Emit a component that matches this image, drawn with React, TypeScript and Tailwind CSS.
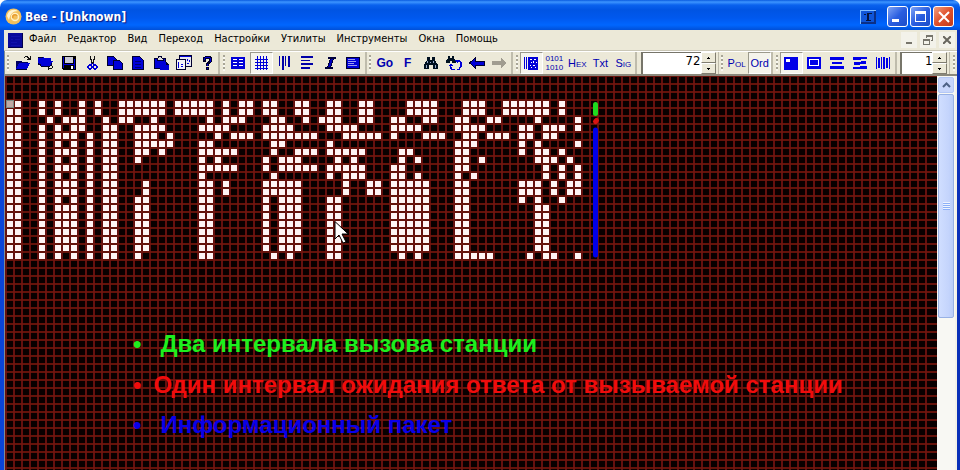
import React from "react";

const range = (a: number, b: number) => Array.from({ length: b - a + 1 }, (_, i) => a + i);

const tall = "0-1 4 6-8 10 12-13 16-17 24-25 32 34-36 40-41 48-52 56-57 66-67";
const head = "0-1 4 6 9 11 14-19 21-25 27 29-30 32-33 36-37 40-41 44-45 50-53 57-59 62-67 69";
const mid = "0-1 4 6-8 10 12-13 17 24-25 27 32-36 42 45-46 48-52 56-57 64-66 68 70-71";

// Filled columns of each signal row, as single columns or inclusive runs.
const signalRows: string[] = [
  head,
  head,
  "0-1 5 7-9 12 14-15 18 25 27-29 33-34 37 39-41 44-45 48-49 52-53 56-57 60-61 66 71",
  "0-1 4 6 8-9 12-13 16-19 24-27 32-35 40-43 48-51 56-59 64-65 67-69 71",
  "0-1 4 6-8 10 12-13 16-18 20 26 28-30 32-38 42-46 48 52-54 57-58 60-62 64-65 67-68",
  "0-1 4 6 8 10 12-13 16-20 24-25 33-34 40 56-58 64 66 71",
  "0-1 4 6-8 10 12-13 16-17 19 24-28 33 36-38 40-44 49-50 56-57 64 66-67 69",
  "0-1 4 6 8 10 12-13 16 24 26 32 34-36 41 43 49 51 56-57 59 66-68 70",
  "0-1 4 6-8 10 12-13 24-28 32 34-38 40-44 48-49 56-57 67 69 71",
  "0-1 4 6 8 10 12-13 24 33 40 42-44 48-49 51 56 58 67 69 71",
  mid,
  mid,
  "0-1 4 6 8 10 12-13 16-17 24-25 32 34-36 40-41 48-52 56-57 64 66 69",
  tall,
  tall,
  tall,
  tall,
  tall,
  tall,
  "0-1 4 6 8 10 12-13 16 24-25 33 35 40-41 49 51 56-60 65 67-68 71",
];

const cells = signalRows.flatMap((row, r) =>
  row.split(" ").flatMap((part) => {
    const [a, b] = part.split("-").map(Number);
    return range(a, b ?? a).map((c) => ({ r, c }));
  }),
);

function Icon({ children, color = "#0000d8" }: { children: React.ReactNode; color?: string }) {
  return (
    <svg width="16" height="16" viewBox="0 0 16 16" fill={color} shapeRendering="crispEdges" aria-hidden="true">
      {children}
    </svg>
  );
}

const K = "#000030";

const OpenIcon = () => (
  <Icon>
    <path d="M1 6h5l1 1h6v2H4l-2 4H1z" fill="#000060" />
    <path d="M4 8h11l-3 6H1z" />
    <path d="M1 14h11v1H1z" fill={K} />
    <path d="M9 2h1V1h3v1h1v1h1V1h1v4h-4V4h1V3h-1V2h-2v1H9z" fill="#111" />
  </Icon>
);
const CloseFileIcon = () => (
  <Icon>
    <path d="M0 2h5l1 1h7v3h2l-3 5H3L0 8z" />
    <path d="M0 2h5v1H0zM3 11h9v-1h1V8h1v3h-2v1H3zM0 8h1v1h2v2H2v-1H0z" fill={K} />
    <path d="M14 11h1v2h-1v1h-3v1h-1v-4h1v2h3z" fill="#111" />
  </Icon>
);
const SaveIcon = () => (
  <Icon>
    <path d="M1 1h14v14H2l-1-1z" fill="#000" />
    <path d="M2 2h1v11H2zM13 4h1v10h-1zM3 9h10v1H3z" />
    <path d="M4 2h8v6H4z" fill="#c8c8d8" />
    <path d="M10 11h2v3h-2z" fill="#fff" />
  </Icon>
);
const CutIcon = () => (
  <Icon>
    <path d="M6 1h1v3h1v3h1V4h1V1h1v4h-1v3H9v1H8V8H7V5H6z" fill="#111" />
    <path d="M7 8h1v2H7zM9 8h1v2H9z" />
    <circle cx="6" cy="12" r="2" fill="none" stroke="#0000d8" strokeWidth="1.5" />
    <circle cx="11" cy="12" r="2" fill="none" stroke="#0000d8" strokeWidth="1.5" />
  </Icon>
);
const CopyIcon = () => (
  <Icon>
    <path d="M.5 1.500h6l3 3v6h-9z" stroke={K} />
    <path d="M6.500 5.500h6l3 3v6h-9z" stroke={K} />
  </Icon>
);
const DocIcon = () => (
  <Icon>
    <path d="M2.500 1.500h7l4 4v9h-11z" stroke={K} />
    <path d="M5 6h6v1H5zM5 9h6v1H5zM5 12h6v1H5z" fill="#000070" />
  </Icon>
);
const PasteIcon = () => (
  <Icon>
    <path d="M1.500 3.500h11v10h-11z" stroke={K} />
    <path d="M4 3h1l1-2h2l1 2h1v2H4z" fill="#ddd" stroke={K} />
    <path d="M7 7h6l3 3v5H7z" />
    <path d="M13 7h1v1h1v1h1v1h-3z" fill={K} />
  </Icon>
);
const WindowsIcon = () => (
  <Icon>
    <path d="M3.500.5h12v11h-12z" fill="#e8e8f0" stroke={K} />
    <path d="M4 1h11v1H4z" />
    <path d="M.5 4.500h9v10h-9z" fill="#f4f4f8" stroke={K} />
    <path d="M2 7h1v6H2zM5 9h2v1H5zM5 11h2v1H5zM11 4h1v2h-1zM13 5h1v2h-1zM11 8h2v1h-2z" />
  </Icon>
);
const HelpIcon = () => (
  <Icon>
    <path d="M4 2h2V1h6v1h1v5h-1v1h-1v1h-1v2H7V8h1V7h1V6h1V4H7v3H4zM7 12h3v3H7z" fill="#000028" />
    <path d="M5 3h1V2h5v1H6v2H5zM11 3h1v4h-1zM8 9h1v2H8zM8 13h1v1H8z" />
  </Icon>
);
const TableIcon = () => (
  <Icon>
    <path d="M1 2h14v12H1z" />
    <path d="M3 4h4v1H3zM9 4h4v1H9zM3 7h4v1H3zM9 7h4v1H9zM3 10h4v1H3zM9 10h4v1H9z" fill="#fff" />
  </Icon>
);
const GridIcon = () => (
  <Icon>
    <path d="M4 1h1v14H4zM7 1h1v14H7zM10 1h1v14h-1zM13 1h1v14h-1zM2 4h13v1H2zM2 7h13v1H2zM2 10h13v1H2zM2 13h13v1H2z" />
  </Icon>
);
const ColsIcon = () => (
  <Icon color="#0000a8">
    <path d="M3 1h1v10H3zM6 1h2v14H6zM9 1h1v10H9zM12 1h2v11h-2z" />
  </Icon>
);
const RowsIcon = () => (
  <Icon color="#0000a8">
    <path d="M2 1h12v2H2zM2 5h9v1H2zM2 8h12v2H2zM2 12h9v2H2z" />
  </Icon>
);
const ItalicIcon = () => (
  <Icon color="#000038">
    <path d="M6 2h8v2h-2l-3 8h2v2H3v-2h2l3-8H6z" />
    <path d="M9 4h2l-3 8H6z" fill="#0000c0" />
  </Icon>
);
const ListIcon = () => (
  <Icon>
    <path d="M1.500 2.500h13v11h-13z" stroke={K} />
    <path d="M3 4h7v1H3zM3 6h8v1H3zM3 8h6v1H3zM3 10h9v1H3z" fill="#9a9af0" />
  </Icon>
);
const FindIcon = () => (
  <Icon color="#001020">
    <path d="M4 2h3v3h2V2h3v3l3 5v4h-5v-4H6v4H1v-4l3-5z" />
    <path d="M4 6h1v2H4zM3 10h1v3H3zM10 6h1v2h-1zM12 10h1v3h-1zM7 7h1v1H7z" fill="#9ac" />
  </Icon>
);
const FindNextIcon = () => (
  <Icon>
    <path d="M2 1h2v2h2V1h2v2l2 3v2H6V6H4v2H0V6l2-3z" fill="#012" />
    <path d="M5 9v3h1v2h3v1H5v-1H4v-3H3v-1h1V9zM12 5h2v1h1v1h1v5h-1v1h-1v2h-3v-1h2v-2h1V7h-2z" />
    <path d="M3 11h4v-1H6V9H4v1H3zM9 5h3v3h-1V7h-1V6H9z" />
  </Icon>
);
const BackIcon = () => (
  <Icon>
    <path d="M.5 8l6-5v3h9v4h-9v3z" stroke={K} />
  </Icon>
);
const ForwardIcon = () => (
  <Icon color="#a09c90">
    <path d="M0 6h9V3l6 5-6 5v-3H0z" />
  </Icon>
);
const BarcodeIcon = () => (
  <Icon>
    <path d="M1 2h1v12H1zM3 2h1v12H3zM5 2h10v13H5z" />
    <path d="M7 4h2v1H7zM11 4h2v1h-2zM8 7h1v1H8zM10 6h1v2h-1zM13 7h1v1h-1zM7 10h1v1H7zM10 10h2v1h-2zM8 12h1v1H8zM12 12h1v1h-1z" fill="#fff" />
  </Icon>
);
const CornerIcon = () => (
  <Icon color="#0000e8">
    <path d="M1 2h14v13H1z" />
    <path d="M3 4h4v3H3z" fill="#fff" />
  </Icon>
);
const FrameIcon = () => (
  <Icon color="#0000e8">
    <path d="M1 2h14v12H1z" />
    <path d="M3.500 4.500h9v6h-9z" fill="none" stroke="#fff" />
  </Icon>
);
const BarsIcon = () => (
  <Icon color="#0000e8">
    <path d="M1 2h14v3H1zM3 7h10v2H3zM1 11h14v3H1z" />
  </Icon>
);
const WaveBarsIcon = () => (
  <Icon color="#0000e8">
    <path d="M1 2h14v2H9v1H1zM2 7h7V6h5v3H8v1H2zM1 12h7v-1h7v3H1z" />
  </Icon>
);
const StripesIcon = () => (
  <Icon color="#0000e8">
    <path d="M1 2h1v12H1zM3 3h2v10H3zM6 2h1v12H6zM8 2h2v12H8zM11 3h2v10h-2zM14 2h1v12h-1z" />
  </Icon>
);

function Grip() {
  return <span className="mx-[2px] my-[3px] w-[2px] shrink-0 bg-[repeating-linear-gradient(#a8a596_0_2px,#f8f7f0_2px_4px)]" />;
}

function Group({ children }: { children: React.ReactNode }) {
  return (
    <div role="group" className="flex shrink-0 items-stretch border-r-2 border-r-[#bfbcac]">
      <Grip />
      {children}
    </div>
  );
}

function ToolButton({ label, on, children }: { label: string; on?: boolean; children: React.ReactNode }) {
  return (
    <button
      type="button"
      aria-label={label}
      aria-pressed={on}
      className={
        "flex w-[23px] shrink-0 items-center justify-center text-[#0000b0] " +
        (on ? "border border-t-[#9c9a8c] border-r-white border-b-white border-l-[#9c9a8c] bg-[#f5f4ec]" : "")
      }
    >
      {children}
    </button>
  );
}

function Caption({ children, strong }: { children: React.ReactNode; strong?: boolean }) {
  return (
    <span className={"font-['Liberation_Sans',Arial,sans-serif] leading-none " + (strong ? "text-[12px] font-bold" : "text-[11px]")}>
      {children}
    </span>
  );
}

function Spinner({ label, value, width }: { label: string; value: string; width: string }) {
  const step = "flex h-[11px] w-[15px] items-center justify-center border border-t-white border-r-[#807d70] border-b-[#807d70] border-l-white bg-[#ece9d8]";
  return (
    <div className={"flex shrink-0 border-r border-r-[#bfbcac] pr-[2px] pl-[3px] " + width}>
      <input
        aria-label={label}
        defaultValue={value}
        className="h-[22px] min-w-0 flex-1 border-t border-l-2 border-[#77756a] bg-white pb-[7px] text-right text-[13px] leading-none text-black outline-none"
      />
      <div className="flex flex-col">
        <button type="button" aria-label={label + " +"} className={step}>
          <svg width="3" height="2" viewBox="0 0 3 2" shapeRendering="crispEdges"><path d="M1 0h1v1h1v1H0V1h1z" /></svg>
        </button>
        <button type="button" aria-label={label + " −"} className={step}>
          <svg width="3" height="2" viewBox="0 0 3 2" shapeRendering="crispEdges"><path d="M0 0h3v1H2v1H1V1H0z" /></svg>
        </button>
      </div>
    </div>
  );
}

function TitleBar() {
  const box = "flex size-[21px] items-center justify-center rounded-[3px] border border-white";
  return (
    <header className="flex h-[30px] shrink-0 items-center rounded-t-[7px] bg-[linear-gradient(#0a5be0_0,#3d95ff_2px,#0a62ee_5px,#0054e3_10px,#0058ee_18px,#0066ff_25px,#0050d8_30px)] pt-[3px] pr-[6px] pl-[5px]">
      <svg width="17" height="17" viewBox="0 0 17 17" aria-hidden="true">
        <circle cx="8.500" cy="8.500" r="8" fill="#f3c05c" />
        <path d="M2 8a7 7 0 0 1 11-5C8 3 5 6 4 12z" fill="#fff3cf" />
        <circle cx="10" cy="9" r="3.500" fill="none" stroke="#fff0c4" strokeWidth="1.500" />
        <path d="M8 10a2 2 0 0 1 4-2" fill="none" stroke="#e89c30" strokeWidth="1.500" />
      </svg>
      <h1 className="ml-[3px] font-['DejaVu_Sans_Condensed','DejaVu_Sans',sans-serif] text-[12px] font-bold text-white [text-shadow:1px_1px_1px_#0a1883]">
        Bee - [Unknown]
      </h1>
      <div className="ml-auto flex items-center gap-[2px]">
        <button type="button" aria-label="Tray" className="mr-[9px]">
          <svg width="16" height="14" viewBox="0 0 16 14" shapeRendering="crispEdges">
            <path d="M0 0h16v14H0z" fill="#0b2f86" />
            <path d="M1 1h13v11H1z" fill="#0f55d8" />
            <path d="M0 0h16v1H1v13H0z" fill="#7fbcff" />
            <path d="M4 4h2v1H4zM7 3h5v1H9v6h2v1H6v-1h1z" fill="#04133c" />
          </svg>
        </button>
        <button type="button" aria-label="Minimize" className={box + " bg-[linear-gradient(135deg,#7fa4f5,#2a5ee0_50%,#1c4cc8)]"}>
          <span className="mt-[8px] mr-[5px] h-[3px] w-[7px] bg-white" />
        </button>
        <button type="button" aria-label="Maximize" className={box + " bg-[linear-gradient(135deg,#7fa4f5,#2a5ee0_50%,#1c4cc8)]"}>
          <span className="size-[11px] border border-t-[3px] border-white" />
        </button>
        <button type="button" aria-label="Close" className={box + " bg-[linear-gradient(135deg,#f0a080,#e0512c_50%,#c23a18)]"}>
          <svg width="12" height="12" viewBox="0 0 12 12"><path d="M1 1l10 10M11 1L1 11" stroke="#fff" strokeWidth="2" /></svg>
        </button>
      </div>
    </header>
  );
}

const menus = ["Файл", "Редактор", "Вид", "Переход", "Настройки", "Утилиты", "Инструменты", "Окна", "Помощь"];

function MenuBar() {
  const mdi = "flex h-[16px] w-[16px] items-center justify-center bg-[#f3f2ea]";
  return (
    <nav className="flex h-[21px] shrink-0 items-center border-b border-[#c9c6b6] bg-[#ece9d8] pr-[2px] pl-[4px]">
      <svg width="15" height="15" viewBox="0 0 15 15" shapeRendering="crispEdges" aria-hidden="true">
        <path d="M0 0h15v15H0z" fill="#0a0a9c" />
        <path d="M0 14h15v1H0zM14 0h1v15h-1z" fill="#02024c" />
        <path d="M3 3h9v1H3zM3 6h2v1H3zM7 6h5v1H7zM3 9h6v1H3zM3 12h9v1H3z" fill="#1212ac" />
      </svg>
      <ul className="ml-[6px] flex gap-[11px] pb-[2px] text-[11px] text-black">
        {menus.map((m) => (
          <li key={m}>
            <button type="button" className="block leading-[16px]">{m}</button>
          </li>
        ))}
      </ul>
      <div className="ml-auto flex gap-[3px]">
        <button type="button" aria-label="Minimize document" className={mdi}>
          <span className="mt-[6px] h-[2px] w-[6px] bg-[#77756c]" />
        </button>
        <button type="button" aria-label="Restore document" className={mdi}>
          <svg width="10" height="10" viewBox="0 0 10 10" fill="#77756c" shapeRendering="crispEdges">
            <path d="M3 0h7v6H8V5h1V2H4v1H3zM0 4h7v6H0zM1 6v3h5V6z" fillRule="evenodd" />
          </svg>
        </button>
        <button type="button" aria-label="Close document" className={mdi}>
          <svg width="8" height="8" viewBox="0 0 8 8"><path d="M0 0l8 8M8 0L0 8" stroke="#68665e" strokeWidth="2" /></svg>
        </button>
      </div>
    </nav>
  );
}

function Toolbar() {
  return (
    <div role="toolbar" className="flex h-[25px] shrink-0 items-stretch justify-between overflow-hidden border-t border-b-2 border-t-white border-b-[#8a887c] bg-[#ece9d8]">
      <Group>
        <ToolButton label="Open"><OpenIcon /></ToolButton>
        <ToolButton label="Close file"><CloseFileIcon /></ToolButton>
        <ToolButton label="Save"><SaveIcon /></ToolButton>
        <ToolButton label="Cut"><CutIcon /></ToolButton>
        <ToolButton label="Copy"><CopyIcon /></ToolButton>
        <ToolButton label="Document"><DocIcon /></ToolButton>
        <ToolButton label="Paste"><PasteIcon /></ToolButton>
        <ToolButton label="Windows"><WindowsIcon /></ToolButton>
        <ToolButton label="Help"><HelpIcon /></ToolButton>
      </Group>
      <Group>
        <ToolButton label="Table"><TableIcon /></ToolButton>
        <ToolButton label="Grid" on><GridIcon /></ToolButton>
        <ToolButton label="Columns"><ColsIcon /></ToolButton>
        <ToolButton label="Rows"><RowsIcon /></ToolButton>
        <ToolButton label="Italic"><ItalicIcon /></ToolButton>
        <ToolButton label="List"><ListIcon /></ToolButton>
      </Group>
      <Group>
        <ToolButton label="Go"><Caption strong>Go</Caption></ToolButton>
        <ToolButton label="F"><Caption strong>F</Caption></ToolButton>
        <ToolButton label="Find"><FindIcon /></ToolButton>
        <ToolButton label="Find next"><FindNextIcon /></ToolButton>
        <ToolButton label="Back"><BackIcon /></ToolButton>
        <ToolButton label="Forward"><ForwardIcon /></ToolButton>
      </Group>
      <Group>
        <ToolButton label="Raster" on><BarcodeIcon /></ToolButton>
        <ToolButton label="Binary">
          <span className="flex flex-col font-['Liberation_Sans',Arial,sans-serif] text-[8px] leading-[9px]">
            <span>0101</span>
            <span>1010</span>
          </span>
        </ToolButton>
        <ToolButton label="Hex"><Caption>H<small className="text-[8px]">EX</small></Caption></ToolButton>
        <ToolButton label="Txt"><Caption>Txt</Caption></ToolButton>
        <ToolButton label="Sig"><Caption>S<small className="text-[8px]">IG</small></Caption></ToolButton>
      </Group>
      <Spinner label="Period" value="72" width="w-[81px]" />
      <Group>
        <ToolButton label="Pol"><Caption>P<small className="text-[8px]">OL</small></Caption></ToolButton>
        <ToolButton label="Ord" on><Caption>Ord</Caption></ToolButton>
      </Group>
      <Group>
        <ToolButton label="Corner" on><CornerIcon /></ToolButton>
        <ToolButton label="Frame"><FrameIcon /></ToolButton>
        <ToolButton label="Bars"><BarsIcon /></ToolButton>
        <ToolButton label="Wave bars"><WaveBarsIcon /></ToolButton>
        <ToolButton label="Stripes"><StripesIcon /></ToolButton>
      </Group>
      <Spinner label="Scale" value="1" width="w-[53px]" />
      <Grip />
    </div>
  );
}

function Raster() {
  return (
    <svg className="absolute inset-0 size-full" shapeRendering="crispEdges" aria-hidden="true">
      <defs>
        <pattern id="rows" width="8" height="8" patternUnits="userSpaceOnUse">
          <path d="M0 7h8v1H0zM0 0h8v1H0z" fill="#64120a" />
        </pattern>
        <pattern id="cols" width="8" height="8" patternUnits="userSpaceOnUse">
          <path d="M0 0h2v8H0z" fill="#64100e" />
          <path d="M0 7h2v1H0zM0 0h2v1H0z" fill="#6e1610" />
        </pattern>
      </defs>
      <rect width="100%" height="100%" fill="#080000" />
      <rect width="100%" height="100%" fill="url(#rows)" />
      <rect width="99%" height="100%" fill="url(#cols)" />
      <g fill="#fff4f4">
        {cells.map(({ r, c }) => (
          <rect key={r + "-" + c} x={2 + c * 8} y={25 + r * 8} width="6" height="6" />
        ))}
      </g>
      <path d="M1.500 24.500h7v7h-7z" fill="#c0a8a4" stroke="#7c8c84" />
      <g shapeRendering="geometricPrecision" strokeWidth="5" strokeLinecap="round">
        <path d="M590.500 28.500v9" stroke="#1fdc1f" />
        <path d="M590.500 45.500l1-1" stroke="#d81414" strokeWidth="5" />
        <path d="M590.500 54v125" stroke="#0000e8" />
        <path d="M330 146v17l4-4 4 8 3-1-4-8h6z" fill="#fff" stroke="#000" strokeWidth="1" />
      </g>
    </svg>
  );
}

function Workspace() {
  const item = "flex items-center leading-[28px] whitespace-nowrap";
  return (
    <main className="relative min-h-0 flex-1 overflow-hidden">
      <Raster />
      <ul className="relative pt-[254px] pl-[128px] font-['Liberation_Sans',Arial,sans-serif] text-[24px] font-bold">
        <li className={item + " gap-[19px] text-[#1eee1e]"}><span>•</span><span>Два интервала вызова станции</span></li>
        <li className={item + " mt-[13px] gap-[12px] text-[#f00c0c]"}><span>•</span><span>Один интервал ожидания ответа от вызываемой станции</span></li>
        <li className={item + " mt-[12px] gap-[19px] text-[#0a00e8]"}><span>•</span><span>Информационный пакет</span></li>
      </ul>
    </main>
  );
}

function ScrollBar() {
  return (
    <aside className="flex w-[18px] shrink-0 flex-col gap-px bg-[#f8f8f3] p-px">
      <button type="button" aria-label="Scroll up" className="flex h-[16px] items-center justify-center rounded-[2px] border border-[#b4c8f6] bg-[#c8d6fb]">
        <svg width="9" height="6" viewBox="0 0 9 6"><path d="M1 5l3.500-3.500L8 5" fill="none" stroke="#4d6185" strokeWidth="2" /></svg>
      </button>
      <div className="flex h-[224px] items-center justify-center rounded-[2px] border border-[#98b1e4] bg-[linear-gradient(90deg,#d0deff,#c4d4fc_70%,#b8ccf8)]">
        <span className="h-[8px] w-[7px] bg-[repeating-linear-gradient(#eef4fe_0_1px,#8cb0f8_1px_2px)]" />
      </div>
    </aside>
  );
}

export default function App() {
  return (
    <div className="flex h-screen flex-col bg-white font-['DejaVu_Sans_Condensed','DejaVu_Sans',sans-serif]">
      <TitleBar />
      <div className="flex min-h-0 flex-1 flex-col border-r-[3px] border-l-[4px] border-r-[#0a30b8] border-l-[#0a44d8]">
        <MenuBar />
        <div className="flex min-h-0 flex-1 flex-col border-l border-l-[#7c8c98]">
          <Toolbar />
          <div className="flex min-h-0 flex-1 border-r-2 border-r-[#f4f2e8]">
            <Workspace />
            <ScrollBar />
          </div>
        </div>
      </div>
    </div>
  );
}
